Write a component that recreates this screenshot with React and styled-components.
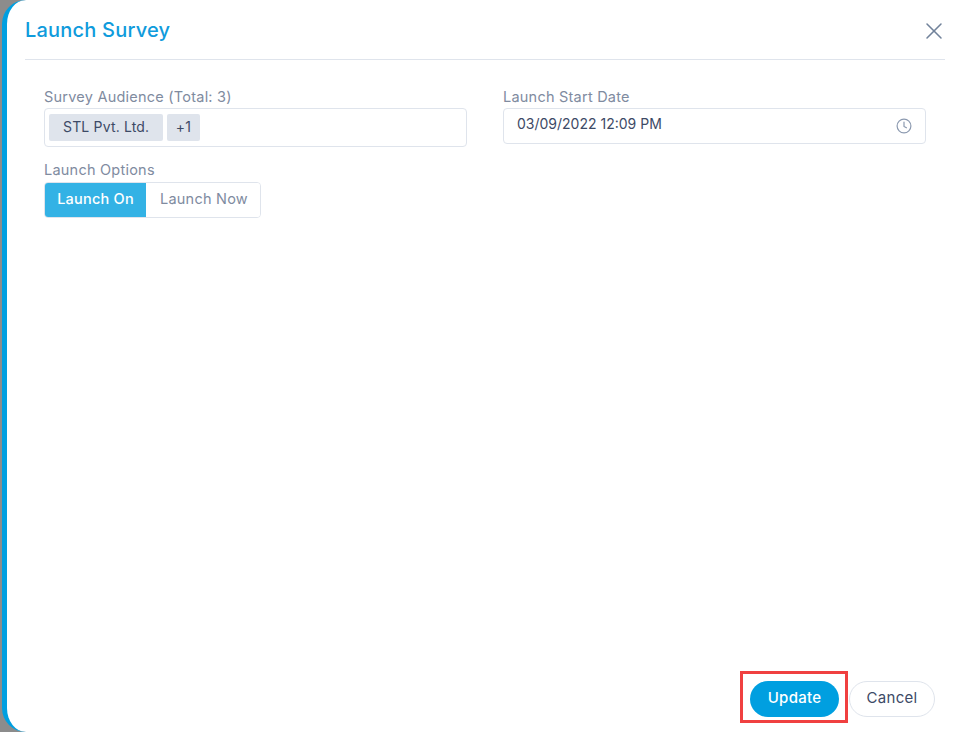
import React from "react";
import styled, { createGlobalStyle } from "styled-components";
import { X } from "lucide-react";

const Global = createGlobalStyle`
  html, body { margin: 0; padding: 0; height: 100%; background: #8c8c8c; }
  body { font-family: "Inter", "Liberation Sans", sans-serif; overflow: hidden; }
  * { box-sizing: border-box; }
`;

const Backdrop = styled.div`
  width: 960px;
  height: 732px;
  background: #8c8c8c;
  padding-left: 2px;
  display: flex;
`;

const Modal = styled.div`
  flex: 1;
  height: 732px;
  background: #fff;
  border-left: 5px solid #009fe0;
  border-radius: 24px 0 0 24px;
  display: flex;
  flex-direction: column;
  padding: 0 15px 0 18px;
`;

const Header = styled.header`
  height: 60px;
  border-bottom: 1px solid #dfe4ec;
  display: flex;
  align-items: center;
  justify-content: space-between;
  flex: none;
`;

const Title = styled.h2`
  margin: 0;
  font-size: 20px;
  font-weight: 500;
  color: #0f9bdc;
  letter-spacing: 0.2px;
`;

const CloseButton = styled.button`
  border: 0;
  background: none;
  padding: 0;
  display: flex;
  color: #71829a;
  margin: 2px -3px 0 0;
`;

const Body = styled.div`
  flex: 1;
  padding: 28px 19px 0;
  display: grid;
  grid-template-columns: 423px 423px;
  column-gap: 36px;
  align-content: start;
`;

const Field = styled.div`
  display: flex;
  flex-direction: column;
  min-width: 0;
`;

const Label = styled.label`
  font-size: 14.5px;
  line-height: 18px;
  margin-bottom: 2px;
  color: #808b9f;
  letter-spacing: 0.23px;
`;

const OptionsLabel = styled(Label)`
  margin-bottom: 3px;
`;

const SelectBox = styled.div`
  height: 39px;
  border: 1px solid #dfe4ec;
  border-radius: 4px;
  padding: 5px 4px;
  display: flex;
  gap: 4px;
`;

const Tag = styled.span`
  height: 27px;
  padding: 0 ${(p) => p.$pad}px 2px;
  background: #dfe4ec;
  border-radius: 2px;
  display: flex;
  align-items: center;
  font-size: 14px;
  letter-spacing: 0.17px;
  color: #3d4a66;
`;

const DateBox = styled.div`
  height: 36px;
  border: 1px solid #dfe4ec;
  border-radius: 4px;
  padding: 0 13px;
  display: flex;
  align-items: center;
  justify-content: space-between;
  font-size: 14px;
  color: #3d4a66;
`;

const DateText = styled.span`
  margin-bottom: 6px;
`;

const ClockIcon = styled.svg`
  width: 16px;
  height: 16px;
  fill: none;
  stroke: #8c9ab0;
  stroke-width: 1.2;
  stroke-linecap: round;
`;

const OptionsField = styled(Field)`
  grid-column: 1;
  margin-top: 14px;
`;

const ButtonGroup = styled.div`
  display: flex;
  width: 217px;
  height: 36px;
  border: 1px solid #dfe4ec;
  border-radius: 4px;
  overflow: hidden;
`;

const Segment = styled.button`
  flex: ${(p) => (p.$active ? "0 0 101px" : "1")};
  border: 0;
  padding: 0 0 3px ${(p) => (p.$active ? 0 : 2)}px;
  font: inherit;
  font-size: 14.5px;
  letter-spacing: 0.23px;
  font-weight: ${(p) => (p.$active ? 500 : 400)};
  background: ${(p) => (p.$active ? "#33b2e5" : "#fff")};
  color: ${(p) => (p.$active ? "#fff" : "#808b9f")};
`;

const Footer = styled.footer`
  flex: none;
  height: 60px;
  display: flex;
  justify-content: flex-end;
  align-items: flex-start;
  gap: 10px;
  padding: 9px 10px 0 0;
  position: relative;
`;

const Highlight = styled.div`
  position: absolute;
  right: 97px;
  top: -1px;
  width: 108px;
  height: 52px;
  border: 3px solid #f04040;
  pointer-events: none;
`;

const Primary = styled.button`
  width: 89px;
  height: 36px;
  border: 0;
  padding: 0 0 3px;
  border-radius: 18px;
  background: #009fe0;
  color: #fff;
  font: inherit;
  font-size: 15px;
  font-weight: 500;
  letter-spacing: 0.27px;
`;

const Secondary = styled.button`
  width: 86px;
  height: 36px;
  border: 1px solid #dfe4ec;
  padding: 0 0 3px;
  border-radius: 18px;
  background: #fff;
  color: #3d4a66;
  font: inherit;
  font-size: 15px;
  letter-spacing: 0.27px;
`;

export default function App() {
  return (
    <>
      <Global />
      <Backdrop>
        <Modal>
          <Header>
            <Title>Launch Survey</Title>
            <CloseButton aria-label="Close">
              <X size={28} strokeWidth={1.3} />
            </CloseButton>
          </Header>
          <Body>
            <Field>
              <Label>Survey Audience (Total: 3)</Label>
              <SelectBox>
                <Tag $pad={14}>STL Pvt. Ltd.</Tag>
                <Tag $pad={8.5}>+1</Tag>
              </SelectBox>
            </Field>
            <Field>
              <Label>Launch Start Date</Label>
              <DateBox>
                <DateText>03/09/2022 12:09 PM</DateText>
                <ClockIcon viewBox="0 0 16 16">
                  <circle cx="8" cy="8" r="6.9" />
                  <path d="M8 4v4.4l2.4 1.4" />
                </ClockIcon>
              </DateBox>
            </Field>
            <OptionsField>
              <OptionsLabel>Launch Options</OptionsLabel>
              <ButtonGroup>
                <Segment $active>Launch On</Segment>
                <Segment>Launch Now</Segment>
              </ButtonGroup>
            </OptionsField>
          </Body>
          <Footer>
            <Highlight />
            <Primary>Update</Primary>
            <Secondary>Cancel</Secondary>
          </Footer>
        </Modal>
      </Backdrop>
    </>
  );
}
